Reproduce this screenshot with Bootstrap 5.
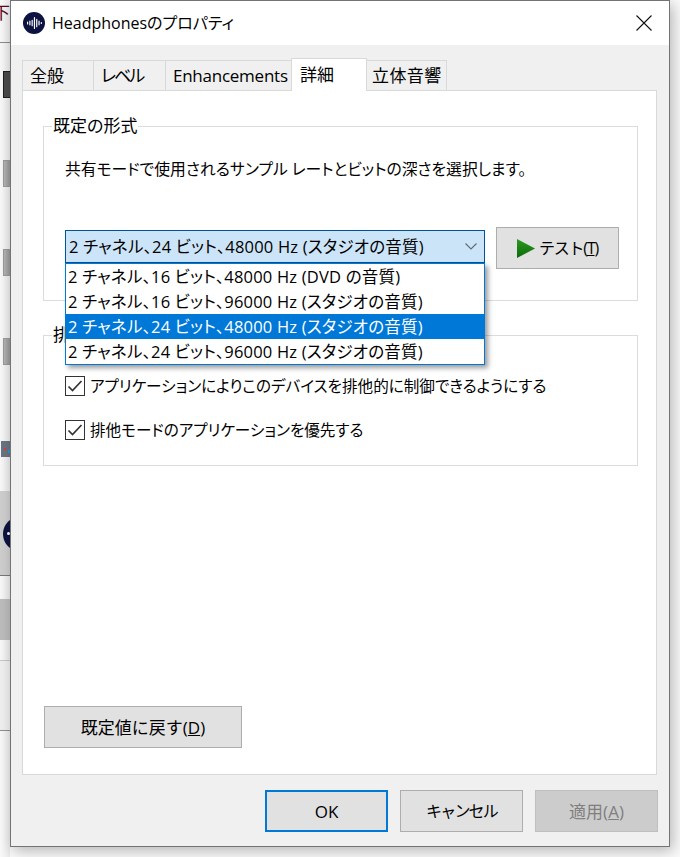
<!DOCTYPE html>
<html lang="ja">
<head>
    <meta charset="UTF-8">
    <meta name="viewport" content="width=device-width, initial-scale=1.0">
    <title>Headphonesのプロパティ</title>
    <link href="https://cdn.jsdelivr.net/npm/bootstrap@5.3.3/dist/css/bootstrap.min.css" rel="stylesheet">
    <style>
        html, body {
            height: 100%;
        }
        body {
            background-color: #fbfbfb;
            color: #000;
            font-family: "Open Sans", "Noto Sans CJK JP", sans-serif;
            font-size: 16px;
            font-feature-settings: "palt";
            overflow: hidden;
        }
        /* desktop behind the dialog, only a 10px strip shows */
        .desk {
            position: absolute;
            left: 0;
            top: 0;
            width: 10px;
            height: 857px;
            overflow: hidden;
            background: linear-gradient(to right, #fafafa, #ebebeb);
        }
        .desk > * {
            position: absolute;
        }
        .desk-glyph { left: -7px; top: 1px; color: #5a0a1e; font-size: 17px; line-height: 24px; }
        .desk-line { left: 0; width: 10px; height: 1px; background: #8a8a90; }
        .desk-line-a { top: 42px; }
        .desk-line-b { top: 575px; background: #77777c; }
        .desk-line-c { top: 660px; background: #c8c8c8; }
        .desk-line-d { top: 730px; background: #8f8f8f; }
        .desk-dev { left: 3px; width: 10px; height: 27px; background: linear-gradient(to right, #b5b5b5, #8f8f8f); border: 1px solid #9a9a9a; }
        .desk-dev-a { top: 71px; background: #4b4b4b; border-color: #1f1f1f; }
        .desk-dev-b { top: 160px; }
        .desk-dev-c { top: 249px; }
        .desk-dev-d { top: 338px; }
        .desk-net { left: 1px; top: 441px; width: 12px; height: 16px; background: #6b7480; }
        .desk-led-r { left: 4px; top: 448px; width: 2px; height: 2px; background: #d04040; }
        .desk-led-b { left: 8px; top: 450px; width: 2px; height: 3px; background: #2f90e0; }
        .desk-band { left: 0; width: 10px; }
        .desk-band-a { top: 491px; height: 84px; background: #cfcfcf; }
        .desk-band-b { top: 599px; height: 41px; background: #bdbdbd; }
        .desk-band-c { top: 661px; height: 69px; background: #f0f0f0; }
        .desk-disc { left: 3px; top: 518px; width: 28px; height: 32px; border-radius: 50%; background: #0d1340; }
        .desk-dot { left: 7px; top: 532px; width: 3px; height: 3px; border-radius: 50%; background: #fff; }

        .dlg-win {
            position: absolute;
            left: 10px;
            top: 0;
            width: 660px;
            height: 847px;
            background: #f0f0f0;
            border: 1px solid #747474;
            box-shadow: 3px 4px 14px rgba(0, 0, 0, .28);
        }
        .dlg-title {
            height: 44px;
            padding-left: 12px;
            padding-right: 17px;
            gap: 7px;
            line-height: 1;
        }
        .dlg-tabs {
            margin: 12px 12px 0 11px;
            padding: 0;
            border: 0;
            height: 33px;
            align-items: flex-end;
            position: relative;
            z-index: 1;
        }
        .dlg-tab {
            display: block;
            height: 30px;
            line-height: 30px;
            padding: 0 0 0 7px;
            color: #000;
            background: #f0f0f0;
            border: 1px solid #d9d9d9;
            border-bottom: 0;
            margin-left: -1px;
            border-radius: 0;
            font-size: 17px;
            white-space: nowrap;
            text-decoration: none;
        }
        .dlg-tab.active {
            height: 33px;
            line-height: 32px;
            margin-bottom: -1px;
            padding-left: 8px;
            background: #fff;
            position: relative;
            z-index: 2;
        }
        .tab-a { width: 72px; margin-left: 0; }
        .tab-b { width: 73px; letter-spacing: -2px; }
        .tab-c { width: 127px; letter-spacing: -.25px; }
        .tab-d { width: 76px; }
        .tab-e { width: 81px; padding-left: 5px; letter-spacing: .4px; }
        .dlg-panel {
            margin: 0 12px 0 11px;
            height: 685px;
            background: #fff;
            border: 1px solid #d9d9d9;
            padding: 23px 18px 26px 20px;
        }
        .grp {
            border: 1px solid #dcdcdc;
            padding: 0 21px;
            margin: 0;
        }
        .grp-one { height: 187px; }
        .grp-two { height: 143px; margin-top: 22px; }
        .grp legend {
            float: none;
            width: auto;
            font-size: 17px;
            line-height: 24px;
            margin: 0 0 0 -13px;
            padding: 0 1px;
        }
        .grp-desc { margin-top: 19px; line-height: 24px; font-size: 15.8px; }
        .fmt-row { margin-top: 46px; gap: 11px; }
        .fmt-wrap { width: 420px; margin-top: 3px; position: relative; }
        .fmt-select {
            height: 33px;
            background: #cce4f7;
            border: 1px solid #005499;
            padding: 0 7px 0 3px;
            line-height: 30px;
            white-space: nowrap;
        }
        .fmt-text {
            font-size: 16.5px;
            letter-spacing: .2px;
        }
        .fmt-list {
            position: absolute;
            left: 0;
            top: 33px;
            width: 420px;
            background: #fff;
            border: 1px solid #0078d7;
            border-radius: 0;
            box-shadow: 3px 3px 5px rgba(0, 0, 0, .4);
            z-index: 5;
        }
        .fmt-list .list-group-item {
            height: 25px;
            line-height: 25px;
            margin: 0;
            padding: 0 2px;
            border: 0;
            border-radius: 0;
            color: #000;
            background: transparent;
            white-space: nowrap;
        }
        .fmt-list .list-group-item.active {
            margin-top: 0;
            background: #0078d7;
            color: #fff;
        }
        .win-btn {
            background: #e1e1e1;
            border: 1px solid #adadad;
            border-radius: 0;
            color: #000;
            font-size: 17px;
            height: 42px;
            width: 123px;
            padding: 0;
            line-height: 1;
        }
        .win-btn.is-default { border: 2px solid #0078d7; }
        .win-btn:disabled {
            background: #ccc;
            border-color: #bfbfbf;
            color: #7f7f7f;
            opacity: 1;
        }
        .win-btn-wide { width: 198px; margin-left: 1px; }
        .btn-kana { font-size: 16px; letter-spacing: -1.8px; }
        .btn-test { font-size: 16px; letter-spacing: -1.2px; }
        .opt-row { gap: 5px; line-height: 24px; font-size: 15.6px; }
        .opt-row .form-check-input {
            width: 20px;
            height: 20px;
            margin: 0;
            flex: none;
            border: 1px solid #333;
            border-radius: 0;
            background-color: #fff;
            background-size: 20px 20px;
            background-image: url("data:image/svg+xml,%3Csvg xmlns='http://www.w3.org/2000/svg' viewBox='0 0 20 20'%3E%3Cpath d='M3.5 10.5l4 4 9-9.5' fill='none' stroke='%23333' stroke-width='1.7'/%3E%3C/svg%3E");
        }
        .opt-first { margin-top: 27px; }
        .opt-next { margin-top: 20px; }
        .dlg-foot {
            margin-top: 15px;
            padding-right: 11px;
            gap: 12px;
        }
    </style>
</head>
<body>

    <!-- Escritorio detrás del diálogo -->
    <div class="desk" aria-hidden="true">
        <span class="desk-glyph">下</span>
        <span class="desk-line desk-line-a"></span>
        <span class="desk-dev desk-dev-a"></span>
        <span class="desk-dev desk-dev-b"></span>
        <span class="desk-dev desk-dev-c"></span>
        <span class="desk-dev desk-dev-d"></span>
        <span class="desk-net"></span>
        <span class="desk-led-r"></span>
        <span class="desk-led-b"></span>
        <span class="desk-band desk-band-a"></span>
        <span class="desk-disc"></span>
        <span class="desk-dot"></span>
        <span class="desk-line desk-line-b"></span>
        <span class="desk-band desk-band-b"></span>
        <span class="desk-line desk-line-c"></span>
        <span class="desk-band desk-band-c"></span>
        <span class="desk-line desk-line-d"></span>
    </div>

    <div class="dlg-win">
        <div class="dlg-title bg-white d-flex align-items-center">
            <svg width="22" height="22" viewBox="0 0 24 24" class="flex-shrink-0">
                <circle cx="12" cy="12" r="12" fill="#0d1340"/>
                <path d="M5 11v2M7.500 10v4M10 9v6M12.500 6v12M15 8v8M17.500 10v4M20 11.500v1" stroke="#fff" stroke-width="1.300" stroke-linecap="round"/>
            </svg>
            <span>Headphonesのプロパティ</span>
            <svg width="16" height="16" viewBox="0 0 16 16" class="ms-auto">
                <path d="M.5.5l15 15M15.500.5l-15 15" stroke="#111" stroke-width="1.100" fill="none"/>
            </svg>
        </div>

        <ul class="nav dlg-tabs d-flex">
            <li class="nav-item"><a class="dlg-tab tab-a">全般</a></li>
            <li class="nav-item"><a class="dlg-tab tab-b">レベル</a></li>
            <li class="nav-item"><a class="dlg-tab tab-c">Enhancements</a></li>
            <li class="nav-item"><a class="dlg-tab tab-d active">詳細</a></li>
            <li class="nav-item"><a class="dlg-tab tab-e">立体音響</a></li>
        </ul>

        <div class="dlg-panel d-flex flex-column">
            <fieldset class="grp grp-one">
                <legend>既定の形式</legend>
                <div class="grp-desc">共有モードで使用されるサンプル レートとビットの深さを選択します。</div>
                <div class="fmt-row d-flex align-items-start">
                    <div class="fmt-wrap flex-shrink-0">
                        <div class="fmt-select d-flex align-items-center justify-content-between">
                            <span class="fmt-text">2 チャネル、24 ビット、48000 Hz (スタジオの音質)</span>
                            <svg width="12" height="7" viewBox="0 0 12 7"><path d="M.5.500l5.500 5.500 5.500-5.500" fill="none" stroke="#5f6a75" stroke-width="1.100"/></svg>
                        </div>
                        <div class="list-group fmt-list">
                            <div class="list-group-item fmt-text">2 チャネル、16 ビット、48000 Hz (DVD の音質)</div>
                            <div class="list-group-item fmt-text">2 チャネル、16 ビット、96000 Hz (スタジオの音質)</div>
                            <div class="list-group-item fmt-text active">2 チャネル、24 ビット、48000 Hz (スタジオの音質)</div>
                            <div class="list-group-item fmt-text">2 チャネル、24 ビット、96000 Hz (スタジオの音質)</div>
                        </div>
                    </div>
                    <button class="btn win-btn btn-test d-flex flex-shrink-0 align-items-center justify-content-center gap-1" type="button">
                        <svg width="18" height="19" viewBox="0 0 18 19"><defs><linearGradient id="pg" x1="0" y1="0" x2="0" y2="1"><stop offset="0" stop-color="#2a9a1e"/><stop offset="1" stop-color="#0c6a0c"/></linearGradient></defs><path d="M0 0l18 9.500L0 19z" fill="url(#pg)"/></svg>
                        <span>テスト(<u>T</u>)</span>
                    </button>
                </div>
            </fieldset>

            <fieldset class="grp grp-two">
                <legend>排他モード</legend>
                <div class="form-check opt-row opt-first d-flex align-items-center p-0">
                    <input class="form-check-input" type="checkbox" checked>
                    <label class="form-check-label">アプリケーションによりこのデバイスを排他的に制御できるようにする</label>
                </div>
                <div class="form-check opt-row opt-next d-flex align-items-center p-0">
                    <input class="form-check-input" type="checkbox" checked>
                    <label class="form-check-label">排他モードのアプリケーションを優先する</label>
                </div>
            </fieldset>

            <button class="btn win-btn win-btn-wide mt-auto" type="button">既定値に戻す(<u>D</u>)</button>
        </div>

        <div class="dlg-foot d-flex justify-content-end">
            <button class="btn win-btn is-default" type="button">OK</button>
            <button class="btn win-btn btn-kana" type="button">キャンセル</button>
            <button class="btn win-btn" type="button" disabled>適用(<u>A</u>)</button>
        </div>
    </div>

</body>
</html>
